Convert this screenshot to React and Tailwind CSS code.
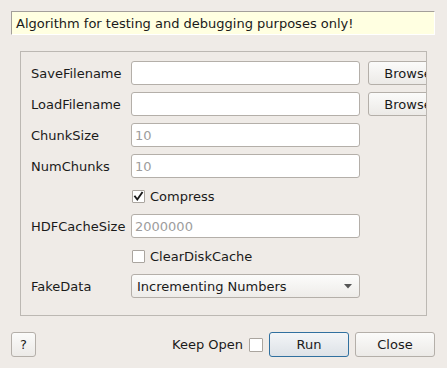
import React from "react";

function TextInput({ placeholder }) {
  return (
    <div className="h-[24px] w-[229px] shrink-0 rounded-[3px] border border-[#b4afa9] bg-white pl-[3px] flex items-center text-[#9d9d9d]">
      {placeholder || ""}
    </div>
  );
}

function Check({ checked, size = 13 }) {
  return (
    <div
      className={`shrink-0 border border-[#aaa59f] bg-white rounded-[1px] flex items-center justify-center ${size === 13 ? "w-[13px] h-[13px]" : "w-[14px] h-[14px]"}`}
    >
      {checked && (
        <svg width="11" height="11" viewBox="0 0 11 11">
          <path d="M2 5.5 L4.3 8.5 L9 1.8" fill="none" stroke="#1a1a1a" strokeWidth="1.9" strokeLinecap="square" />
        </svg>
      )}
    </div>
  );
}

function Row({ label, children }) {
  return (
    <div className="flex items-center h-[24px]">
      <div className="w-[100px] shrink-0">{label}</div>
      {children}
    </div>
  );
}

function Browse() {
  return (
    <div className="ml-[8px] h-[24px] w-[80px] shrink-0 rounded-[3px] border border-[#b4afa9] bg-gradient-to-b from-[#fbfbfa] to-[#eceae7] flex items-center justify-center">
      Browse
    </div>
  );
}

export default function App() {
  return (
    <div
      className="w-[447px] h-[368px] bg-[#efebe7] text-[13px] leading-none text-[#1a1a1a] flex flex-col pt-[11px] pl-[11px] pr-[12px] overflow-hidden"
      style={{ fontFamily: '"DejaVu Sans", Verdana, sans-serif' }}
    >
      <div className="h-[24px] bg-[#ffffe1] border-t border-l border-[#a39f9a] border-b border-r border-b-white border-r-white flex items-center pl-[4px]">
        Algorithm for testing and debugging purposes only!
      </div>

      <div className="mt-[16px] ml-[9px] mr-[8px] h-[265px] border border-[#bcb8b3] overflow-hidden pt-[9px] pl-[10px] flex flex-col gap-[7px]">
        <Row label="SaveFilename">
          <TextInput />
          <Browse />
        </Row>
        <Row label="LoadFilename">
          <TextInput />
          <Browse />
        </Row>
        <Row label="ChunkSize">
          <TextInput placeholder="10" />
        </Row>
        <Row label="NumChunks">
          <TextInput placeholder="10" />
        </Row>
        <div className="flex items-center h-[22px] pl-[101px]">
          <Check checked />
          <span className="ml-[5px]">Compress</span>
        </div>
        <Row label="HDFCacheSize">
          <TextInput placeholder="2000000" />
        </Row>
        <div className="flex items-center h-[22px] pl-[101px]">
          <Check />
          <span className="ml-[5px]">ClearDiskCache</span>
        </div>
        <Row label="FakeData">
          <div className="h-[24px] w-[229px] shrink-0 rounded-[3px] border border-[#b4afa9] bg-gradient-to-b from-[#fcfcfb] to-[#eeece9] flex items-center pl-[5px] pr-[7px] justify-between">
            <span>Incrementing Numbers</span>
            <svg width="8" height="5" viewBox="0 0 8 5">
              <path d="M0 0 H8 L4 4.5 Z" fill="#555" />
            </svg>
          </div>
        </Row>
      </div>

      <div className="mt-[16px] h-[25px] flex items-center">
        <div className="h-[25px] w-[25px] rounded-[3px] border border-[#b4afa9] bg-gradient-to-b from-[#fbfbfa] to-[#eceae7] flex items-center justify-center">
          ?
        </div>
        <div className="flex-1" />
        <span>Keep Open</span>
        <div className="ml-[6px]">
          <Check size={14} />
        </div>
        <div className="ml-[6px] h-[25px] w-[80px] rounded-[3px] border border-[#30709f] bg-gradient-to-b from-[#f3f5f7] to-[#dde2e7] flex items-center justify-center">
          Run
        </div>
        <div className="ml-[6px] h-[25px] w-[80px] rounded-[3px] border border-[#b4afa9] bg-gradient-to-b from-[#fbfbfa] to-[#eceae7] flex items-center justify-center">
          Close
        </div>
      </div>
    </div>
  );
}
